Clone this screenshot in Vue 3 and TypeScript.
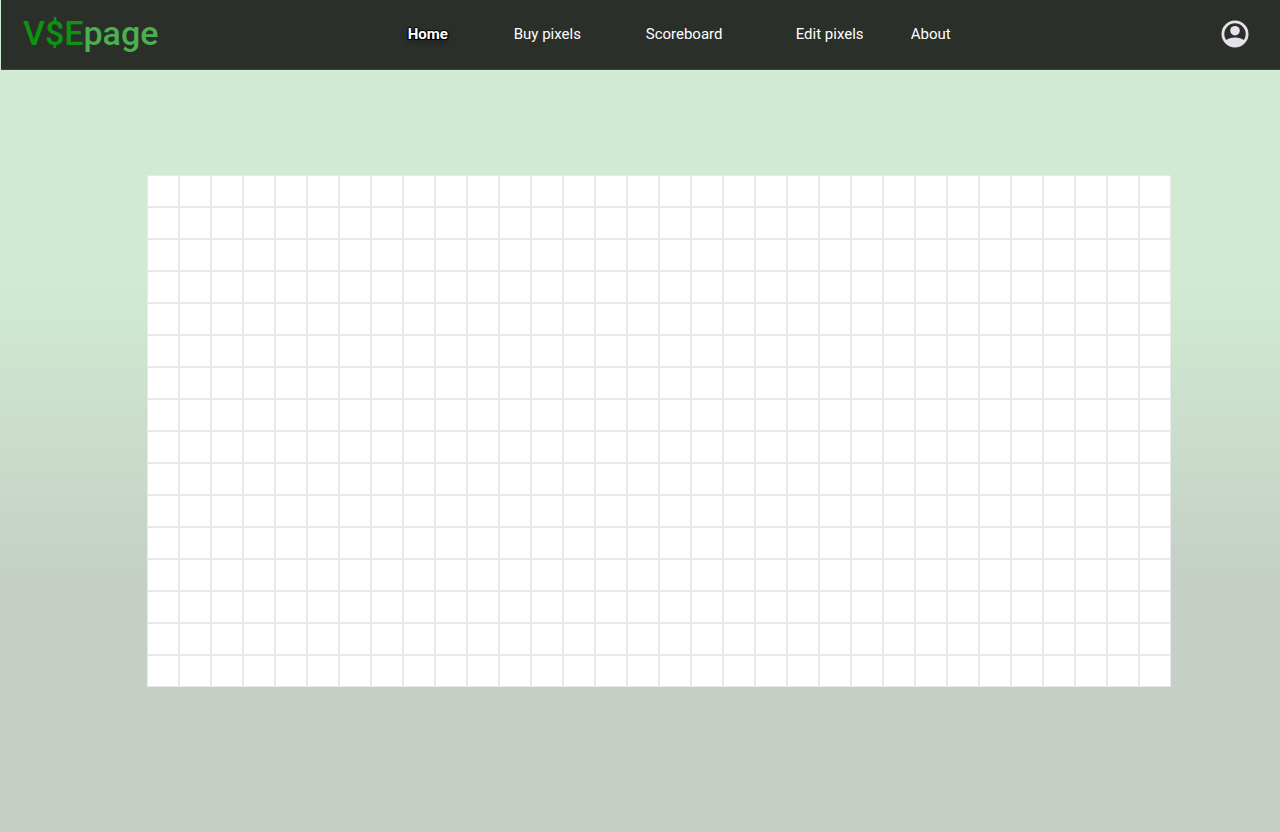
<script setup lang="ts">
interface NavItem {
  label: string
  href: string
  active?: boolean
}

const navItems: NavItem[] = [
  { label: 'Home', href: '#home', active: true },
  { label: 'Buy pixels', href: '#buy' },
  { label: 'Scoreboard', href: '#scoreboard' },
  { label: 'Edit pixels', href: '#edit' },
  { label: 'About', href: '#about' },
]

const columns = 32
const rows = 16
const cellCount = columns * rows
</script>

<template>
  <div class="page">
    <header class="topbar">
      <a class="logo" href="#home"><span class="logo-mark">V$E</span>page</a>
      <nav class="nav" aria-label="Main">
        <a
          v-for="item in navItems"
          :key="item.href"
          :href="item.href"
          class="nav-link"
          :class="{ active: item.active }"
          :aria-current="item.active ? 'page' : undefined"
        >{{ item.label }}</a>
      </nav>
      <button class="account" type="button" aria-label="Account">
        <svg viewBox="0 0 28 28" width="28" height="28" aria-hidden="true">
          <circle cx="14" cy="14" r="12.1" fill="none" stroke="#e6e0e9" stroke-width="2.8" />
          <circle cx="14" cy="10.7" r="4.8" fill="#e6e0e9" />
          <path d="M4.400 20.600C7.200 18.500 10.300 17.400 14 17.400s6.800 1.100 9.600 3.200C21.600 24.600 18 27 14 27S6.400 24.600 4.400 20.600Z" fill="#e6e0e9" />
        </svg>
      </button>
    </header>
    <main class="content">
      <div class="board">
        <div v-for="n in cellCount" :key="n" class="cell"></div>
      </div>
    </main>
  </div>
</template>

<style>
body {
  margin: 0;
}
</style>

<style scoped>
.page {
  display: flex;
  flex-direction: column;
  min-height: 100vh;
  background: linear-gradient(180deg, #d0ebd2 0%, #d0ebd2 34%, #c5cfc6 70%, #c5cfc6 100%);
  font-family: Roboto, "Liberation Sans", sans-serif;
}

.topbar {
  box-sizing: border-box;
  display: flex;
  align-items: center;
  justify-content: space-between;
  height: 70px;
  margin-left: 1px;
  padding: 0 31px 2px 22px;
  border-bottom: 1px solid #3c463d;
  background: #2b2f2a;
}

.logo {
  padding-bottom: 2px;
  color: #4caf50;
  font-size: 34px;
  font-weight: 500;
  line-height: 40px;
  text-decoration: none;
}

.logo-mark {
  color: #0c930f;
}

.nav {
  display: grid;
  grid-template-columns: 106px 132px 150px 115px auto;
  margin-right: 21px;
}

.nav-link {
  justify-self: start;
  color: #fff;
  font-size: 15px;
  line-height: 20px;
  text-decoration: none;
  white-space: nowrap;
}

.nav-link.active {
  font-weight: 700;
  text-shadow:
    1px 0 0 #000,
    -1px 0 0 #000,
    0 1px 0 #000,
    0 -1px 0 #000,
    1px 1px 0 #000,
    -1px 1px 0 #000,
    0 4px 4px rgba(0, 0, 0, 0.4);
}

.account {
  display: flex;
  padding: 0;
  border: 0;
  background: none;
  cursor: pointer;
}

.content {
  padding: 105px 109px 105px 147px;
}

.board {
  display: grid;
  grid-template-columns: repeat(32, 1fr);
  max-width: 1024px;
  margin: 0 auto;
}

.cell {
  box-sizing: border-box;
  aspect-ratio: 1;
  border: 1px solid #e9e9e9;
  background: #fff;
}
</style>
